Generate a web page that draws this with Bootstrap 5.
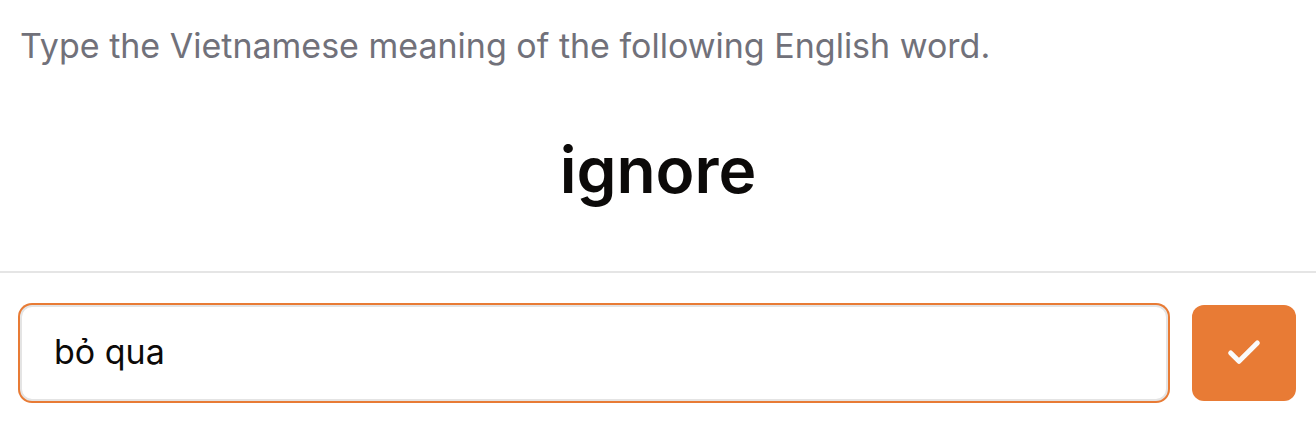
<!DOCTYPE html>
<html lang="en">
<head>
<meta charset="utf-8">
<meta name="viewport" content="width=device-width, initial-scale=1">
<title>Vocabulary practice</title>
<link href="https://cdn.jsdelivr.net/npm/bootstrap@5.3.0/dist/css/bootstrap.min.css" rel="stylesheet">
<style>
  body { font-family: Inter, "Open Sans", sans-serif; color: #0c0a09; background: #fff; }
  .prompt-area { padding: 22px 20px 65px; }
  .prompt-text { font-size: 34px; line-height: 48px; color: #71717a; }
  .quiz-word { font-size: 64px; line-height: 72px; font-weight: 600; margin-top: 64px; }
  .answer-bar { border-top: 2px solid #e5e5e5; padding: 32px 20px 20px; gap: 24px; }
  .answer-input, .answer-input:focus {
    height: 96px; padding: 0 32px 4px; font-size: 34px; color: #0c0a09;
    border: 2px solid #e4e4e4; border-radius: 12px;
    box-shadow: 0 0 0 2px #e87b35;
  }
  .check-btn, .check-btn:hover { width: 104px; height: 96px; border: 0; border-radius: 12px; background: #e87b35; }
</style>
</head>
<body>
<main>
  <section class="prompt-area">
    <p class="prompt-text mb-0">Type the Vietnamese meaning of the following English word.</p>
    <h1 class="quiz-word mb-0 text-center">ignore</h1>
  </section>
  <form class="answer-bar d-flex">
    <input type="text" class="form-control answer-input flex-fill" value="bỏ qua" aria-label="Vietnamese meaning" autocomplete="off">
    <button type="button" class="btn check-btn flex-shrink-0 d-flex align-items-center justify-content-center p-0" aria-label="Check answer">
      <svg width="40" height="40" viewBox="0 0 24 24" fill="none" stroke="#fafafa" stroke-width="3" stroke-linecap="round" stroke-linejoin="round" aria-hidden="true"><path d="M20 6 9 17l-5-5"/></svg>
    </button>
  </form>
</main>
<script src="https://cdn.jsdelivr.net/npm/bootstrap@5.3.0/dist/js/bootstrap.bundle.min.js"></script>
</body>
</html>
